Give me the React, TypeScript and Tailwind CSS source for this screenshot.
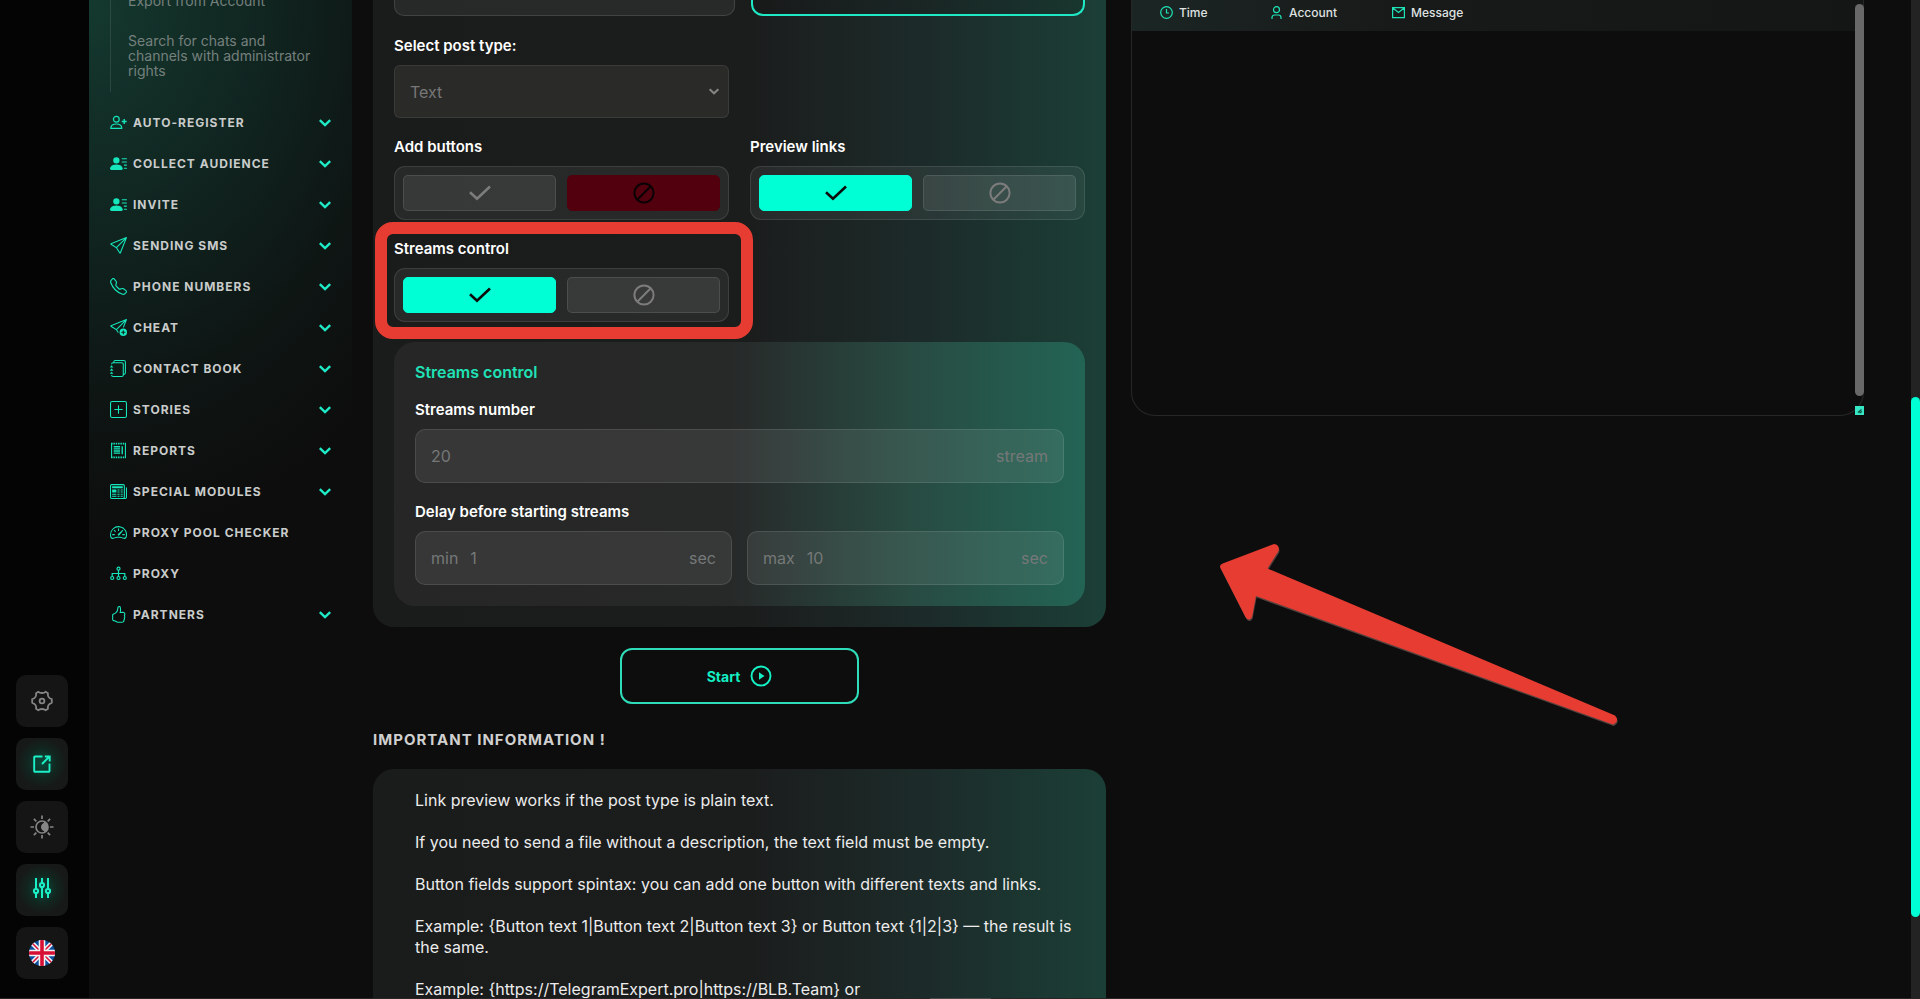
import React from "react";
import {
  BsHandThumbsUp,
  BsJournals,
  BsNewspaper,
  BsPersonLinesFill,
  BsPlusSquare,
  BsSend,
  BsSendPlus,
  BsSpeedometer2,
  BsTelephone,
} from "react-icons/bs";

type IconProps = { className?: string };

const Chevron = ({ className }: IconProps) => (
  <svg viewBox="0 0 12 8" fill="none" stroke="currentColor" strokeWidth="2.400" className={className} aria-hidden="true">
    <path d="M.8 1.200 6 6.200 11.200 1.200" />
  </svg>
);

const PersonPlus = ({ className }: IconProps) => (
  <svg viewBox="0 0 17 17" fill="none" stroke="currentColor" strokeWidth="1.200" className={className} aria-hidden="true">
    <circle cx="6.300" cy="5.200" r="2.900" />
    <path d="M.8 14.400C.8 11.500 3 10 6.300 10s5.500 1.500 5.500 4.400Z" strokeLinejoin="round" />
    <path d="M14.200 5v5M11.700 7.500h5" strokeWidth="1.400" />
  </svg>
);

const Stamp = ({ className }: IconProps) => (
  <svg viewBox="0 0 16 16" fill="none" stroke="currentColor" strokeWidth="1" className={className} aria-hidden="true">
    <path d="M1.500 1v14M14.500 1v14" />
    <path d="M1 1.500h14M1 14.500h14" strokeDasharray="1.400 .8" strokeWidth="1.600" />
    <path d="M3.500 4.500h6M3.500 6.500h6M3.500 8.500h6M3.500 10.500h6M11.500 4v7.500" strokeWidth="1.300" />
  </svg>
);

const Network = ({ className }: IconProps) => (
  <svg viewBox="0 0 17 16" fill="none" stroke="currentColor" strokeWidth="1.200" className={className} aria-hidden="true">
    <circle cx="8.500" cy="3.200" r="1.500" />
    <circle cx="2.200" cy="12.500" r="1.500" />
    <circle cx="8.500" cy="12.500" r="1.500" />
    <circle cx="14.800" cy="12.500" r="1.500" />
    <path d="M8.500 4.700V11M2.200 11V8h12.600v3" />
  </svg>
);

const Check = ({ className }: IconProps) => (
  <svg viewBox="0 0 22 16" fill="none" stroke="currentColor" strokeWidth="2.600" className={className} aria-hidden="true">
    <path d="M1 7.200 8 13.800 21 1.500" />
  </svg>
);

const Ban = ({ className }: IconProps) => (
  <svg viewBox="0 0 22 22" fill="none" stroke="currentColor" strokeWidth="2" className={className} aria-hidden="true">
    <circle cx="11" cy="11" r="9.600" />
    <path d="M4.300 17.700 17.700 4.300" />
  </svg>
);

const Gear = () => (
  <svg viewBox="0 0 22 22" className="size-[22px]" fill="none" stroke="currentColor" strokeWidth="1.800" strokeLinejoin="round" aria-hidden="true">
    <path d="M7.400 1.800C8.600 3.400 13.400 3.400 14.600 1.800L17 3.200C16.200 5.600 17.800 8.600 20.800 9.200V12.800C17.800 13.400 16.200 16.400 17 18.800L14.600 20.200C13.400 18.600 8.600 18.600 7.400 20.200L5 18.800C5.800 16.400 4.200 13.400 1.200 12.800V9.200C4.200 8.600 5.800 5.600 5 3.200Z" />
    <circle cx="11" cy="11" r="2.400" />
  </svg>
);

const External = () => (
  <svg viewBox="0 0 18 18" className="size-[18px]" fill="none" stroke="currentColor" strokeWidth="1.900" aria-hidden="true">
    <path d="M9.500 1.500H2A.8.800 0 0 0 1.200 2.300V16A.8.800 0 0 0 2 16.800H15.700A.8.800 0 0 0 16.500 16V8.500" />
    <path d="M9 9 16 2M11.800 1.500h4.900v4.900" />
  </svg>
);

const Sun = () => (
  <svg viewBox="0 0 24 24" className="size-[24px]" fill="none" stroke="currentColor" strokeWidth="1.700" aria-hidden="true">
    <circle cx="12" cy="12" r="6" />
    <path d="M11 12a4 4 0 0 1 5-4v8a4 4 0 0 1-5-4ZM14 6.500a6 6 0 0 1 0 11Z" fill="currentColor" stroke="none" />
    <path d="M12 .5v3.500M12 20v3.500M.5 12H4M20 12h3.500M3.900 3.900l2.400 2.400M17.700 17.700l2.400 2.400M3.900 20.100l2.400-2.400M17.700 6.300l2.400-2.400" />
  </svg>
);

const Sliders = () => (
  <svg viewBox="0 0 20 22" className="mb-1 h-[22px] w-5" fill="none" stroke="currentColor" strokeWidth="2" aria-hidden="true">
    <path d="M4 1v11M4 16.500V21M10 1v4.500M10 10v11M16 1v11M16 16.500V21" />
    <circle cx="4" cy="14" r="2.100" />
    <circle cx="10" cy="8" r="2.100" />
    <circle cx="16" cy="14" r="2.100" />
  </svg>
);

const Flag = () => (
  <svg viewBox="0 0 26 26" className="size-[26px] rounded-full" aria-hidden="true">
    <rect width="26" height="26" fill="#0b4f9e" />
    <path d="M0 0 26 26M26 0 0 26" stroke="#f2f2f5" strokeWidth="4.600" />
    <path d="M0 0 26 26M26 0 0 26" stroke="#d80f35" strokeWidth="1.500" />
    <path d="M13 0v26M0 13h26" stroke="#f2f2f5" strokeWidth="6.600" />
    <path d="M13 0v26M0 13h26" stroke="#d80f35" strokeWidth="3.600" />
  </svg>
);

const menu: { label: string; icon: React.ComponentType<IconProps>; leaf?: boolean }[] = [
  { label: "Auto-register", icon: PersonPlus },
  { label: "Collect audience", icon: BsPersonLinesFill },
  { label: "Invite", icon: BsPersonLinesFill },
  { label: "Sending SMS", icon: BsSend },
  { label: "Phone numbers", icon: BsTelephone },
  { label: "Cheat", icon: BsSendPlus },
  { label: "Contact book", icon: BsJournals },
  { label: "Stories", icon: BsPlusSquare },
  { label: "Reports", icon: Stamp },
  { label: "Special modules", icon: BsNewspaper },
  { label: "Proxy pool checker", icon: BsSpeedometer2, leaf: true },
  { label: "Proxy", icon: Network, leaf: true },
  { label: "Partners", icon: BsHandThumbsUp },
];

const railButtons = [
  { label: "Settings", icon: Gear, active: false },
  { label: "Open in new window", icon: External, active: true },
  { label: "Theme", icon: Sun, active: false },
  { label: "Filters", icon: Sliders, active: true },
  { label: "Language", icon: Flag, active: false },
];

function Rail() {
  return (
    <aside className="flex w-[89px] shrink-0 flex-col justify-end gap-[11px] bg-[#040404] pb-5 pl-4">
      {railButtons.map(({ label, icon: Icon, active }) => (
        <button
          key={label}
          type="button"
          aria-label={label}
          className={
            active
              ? "flex size-[52px] items-center justify-center rounded-[10px] bg-[#171818] bg-[radial-gradient(circle_at_50%_48%,#0a4a3c_0%,#12251f_40%,transparent_68%)] text-[#1cf0c6]"
              : "flex size-[52px] items-center justify-center rounded-[10px] bg-[#151515] text-[#858585]"
          }
        >
          <Icon />
        </button>
      ))}
    </aside>
  );
}

function Sidebar() {
  return (
    <nav className="w-[263px] shrink-0 overflow-hidden bg-[radial-gradient(ellipse_420px_540px_at_0_0,#14392f_0%,#10231f_45%,#0e1614_72%,transparent_100%)] pr-[21px] pl-[21px]">
      <div className="-mt-[7px] border-l border-white/10 pr-3 pb-[14px] pl-[17px] text-[14px] leading-[15px] text-[#75807d]">
        <a href="#export" className="block">
          Export from Account
        </a>
        <a href="#search" className="mt-[25px] block">
          Search for chats and channels with administrator rights
        </a>
      </div>
      <ul className="mt-[10px]">
        {menu.map(({ label, icon: Icon, leaf }) => (
          <li key={label}>
            <a href={"#" + label.toLowerCase().split(" ").join("-")} className="flex h-[41px] items-center text-[#c9cccb]">
              <Icon className="size-[17px] shrink-0 text-[#16e6bb]" />
              <span className="ml-[6px] text-[12px] font-bold tracking-[1px] uppercase">{label}</span>
              {!leaf && <Chevron className="ml-auto h-2 w-3 text-[#1feac6]" />}
            </a>
          </li>
        ))}
      </ul>
    </nav>
  );
}

function Toggle({ label, on }: { label: string; on: boolean }) {
  const idle = "flex h-9 flex-1 items-center justify-center rounded-[5px] border border-white/10 bg-white/8 text-[#7c7c7c]";
  return (
    <div role="group" aria-label={label}>
      <div className="text-[15px] leading-5 font-semibold text-white">{label}</div>
      <div className="mt-[9px] flex h-[54px] items-center gap-[11px] rounded-[11px] border border-white/10 bg-white/6 px-2">
        <button
          type="button"
          aria-label="On"
          aria-pressed={on}
          className={on ? "flex h-9 flex-1 items-center justify-center rounded-[5px] border border-[#00ffd5] bg-[#00ffd5] text-[#0c0c0c]" : idle}
        >
          <Check className="h-4 w-[22px]" />
        </button>
        <button
          type="button"
          aria-label="Off"
          aria-pressed={!on}
          className={on ? idle : "flex h-9 flex-1 items-center justify-center rounded-[5px] border border-[#52000e] bg-[#52000e] text-[#0a0204]"}
        >
          <Ban className="size-[22px]" />
        </button>
      </div>
    </div>
  );
}

function UnitInput({ id, label, prefix, unit, value }: { id: string; label: string; prefix?: string; unit: string; value: string }) {
  return (
    <div className="flex h-[54px] min-w-0 items-center gap-3 rounded-[10px] border border-white/10 bg-white/8 px-[15px] text-[16px] text-[#757878]">
      {prefix && <label htmlFor={id}>{prefix}</label>}
      <input id={id} aria-label={label} defaultValue={value} className="min-w-0 flex-1 bg-transparent outline-none" />
      <span>{unit}</span>
    </div>
  );
}

const cardBg = "bg-[linear-gradient(90deg,#1a1b1b_0%,#1b1c1c_50%,#1c2c2a_77%,#1b3f36_100%)]";

function PostForm() {
  return (
    <form className={"rounded-b-[21px] px-[21px] pb-[21px] " + cardBg}>
      <div className="grid grid-cols-[341fr_334fr] gap-4">
        <div className="h-4 rounded-b-[10px] border border-t-0 border-white/12 bg-white/6" />
        <div className="h-4 rounded-b-xl border-2 border-t-0 border-[#1fe8c4] bg-black/10" />
      </div>
      <div className="mt-5 grid grid-cols-2 gap-x-[21px] gap-y-[19px]">
        <div className="col-span-2">
          <label htmlFor="post-type" className="block text-[15px] leading-5 font-semibold text-white">
            Select post type:
          </label>
          <div className="mt-[9px] grid grid-cols-2 gap-x-[21px]">
            <div className="relative">
              <select
                id="post-type"
                className="h-[53px] w-full appearance-none rounded-[6px] border border-white/8 bg-[#2a2a29] px-[15px] text-[16px] text-[#777777]"
              >
                <option>Text</option>
              </select>
              <Chevron className="pointer-events-none absolute top-[23px] right-[10px] h-[7px] w-[10px] text-[#858585]" />
            </div>
          </div>
        </div>
        <Toggle label="Add buttons" on={false} />
        <Toggle label="Preview links" on />
        <div className="relative">
          <Toggle label="Streams control" on />
          <div className="pointer-events-none absolute -top-[17px] -right-6 -bottom-[17px] -left-[19px] rounded-[18px] border-[12px] border-[#e63c32]" />
        </div>
      </div>
      <fieldset className="mt-5 rounded-[21px] bg-[linear-gradient(90deg,#262627_0%,#272828_48%,#284a41_74%,#236455_100%)] px-[21px] pt-5 pb-[21px]">
        <h3 className="text-[16px] leading-5 font-semibold text-[#1fe3b6]">Streams control</h3>
        <label htmlFor="streams" className="mt-[18px] mb-[9px] block text-[15px] leading-5 font-semibold text-white">
          Streams number
        </label>
        <UnitInput id="streams" label="Streams number" unit="stream" value="20" />
        <div className="mt-[19px] mb-[9px] text-[15px] leading-5 font-semibold text-white">Delay before starting streams</div>
        <div className="grid grid-cols-2 gap-[15px]">
          <UnitInput id="delay-min" label="Minimum delay" prefix="min" unit="sec" value="1" />
          <UnitInput id="delay-max" label="Maximum delay" prefix="max" unit="sec" value="10" />
        </div>
      </fieldset>
    </form>
  );
}

const notes = [
  "Link preview works if the post type is plain text.",
  "If you need to send a file without a description, the text field must be empty.",
  "Button fields support spintax: you can add one button with different texts and links.",
  "Example: {Button text 1|Button text 2|Button text 3} or Button text {1|2|3} — the result is the same.",
  "Example: {https://TelegramExpert.pro|https://BLB.Team} or",
];

function LogPanel() {
  return (
    <section className="relative h-[416px] rounded-b-3xl border border-t-0 border-[#262828]">
      <table className="w-full table-fixed text-left text-[12px] font-medium text-[#dfe2e1]">
        <thead className="bg-[linear-gradient(90deg,#1b2624_0%,#181a19_35%,#141515_100%)]">
          <tr className="h-[31px]">
            <th className="w-[138px] pb-[6px] pl-7 font-medium">
              <span className="flex items-center gap-[6px]">
                <svg viewBox="0 0 13 13" className="size-[13px] text-[#1fe3b6]" fill="none" stroke="currentColor" strokeWidth="1.200" aria-hidden="true">
                  <circle cx="6.500" cy="6.500" r="5.800" />
                  <path d="M6.500 3v4H9" />
                </svg>
                Time
              </span>
            </th>
            <th className="w-[122px] pb-[6px] font-medium">
              <span className="flex items-center gap-[6px]">
                <svg viewBox="0 0 13 13" className="size-[13px] text-[#1fe3b6]" fill="none" stroke="currentColor" strokeWidth="1.200" aria-hidden="true">
                  <circle cx="6.500" cy="3.700" r="3" />
                  <path d="M2 13v-1.500a2.500 2.500 0 0 1 2.500-2.500h4a2.500 2.500 0 0 1 2.500 2.500V13" />
                </svg>
                Account
              </span>
            </th>
            <th className="pb-[6px] font-medium">
              <span className="flex items-center gap-[6px]">
                <svg viewBox="0 0 13 13" className="size-[13px] text-[#1fe3b6]" fill="none" stroke="currentColor" strokeWidth="1.200" aria-hidden="true">
                  <path d="M.6 1.600h11.800v10H.6ZM.8 2l5.700 4.500L12.200 2" />
                </svg>
                Message
              </span>
            </th>
          </tr>
        </thead>
      </table>
      <div className="absolute top-1 -right-px h-[392px] w-[9px] rounded-full bg-[#686868]" />
      <svg viewBox="0 0 9 9" className="absolute -right-px bottom-0 size-[9px]" aria-hidden="true">
        <rect width="9" height="9" fill="#35e6c2" />
        <path d="M3 6.500 6.500 3.500M4.500 7l2.500-1.500" stroke="#0d4a3e" strokeWidth="1.200" />
      </svg>
    </section>
  );
}

export default function App() {
  return (
    <div className="relative flex h-screen overflow-hidden bg-[#0d0d0d] font-['Inter','Noto_Sans',sans-serif]">
      <Rail />
      <Sidebar />
      <main className="grid min-w-0 flex-1 grid-cols-2 items-start gap-[25px] pr-[47px] pl-[21px]">
        <div className="min-w-0">
          <PostForm />
          <button
            type="button"
            className="mx-auto mt-[21px] flex h-14 w-[239px] items-center justify-center gap-[10px] rounded-xl border-2 border-[#2fdcba] text-[14px] font-bold text-[#14efc4]"
          >
            Start
            <svg viewBox="0 0 22 22" className="size-[22px]" aria-hidden="true">
              <circle cx="11" cy="11" r="9.500" fill="none" stroke="currentColor" strokeWidth="1.900" />
              <path d="M9 7.300 14.500 11 9 14.700Z" fill="currentColor" />
            </svg>
          </button>
          <h2 className="mt-[26px] text-[15px] leading-5 font-bold tracking-[1px] text-[#d0d0d0] uppercase">Important information !</h2>
          <section className={"mt-[19px] rounded-t-[21px] pt-[21px] pr-8 pb-10 pl-[42px] " + cardBg}>
            <div className="space-y-[21px] text-[16px] leading-[21px] text-[#ececec]">
              {notes.map((note) => (
                <p key={note}>{note}</p>
              ))}
            </div>
          </section>
        </div>
        <LogPanel />
      </main>
      <div className="w-[9px] shrink-0 bg-[#232323] pt-[397px]">
        <div className="h-[520px] rounded-full bg-[#00ffd5]" />
      </div>
      <svg viewBox="0 0 440 220" className="pointer-events-none absolute top-[521px] left-[1200px] h-[220px] w-[440px]" aria-hidden="true">
        <path
          d="M24 42 74 23Q80 24 78.500 30L67.500 47.500 415 194.500Q420 200 413 203.500L56 75 52 96Q49 101 45.500 96L20 46Q20 43 24 42Z"
          fill="#55423f"
          transform="translate(.6 1.600)"
        />
        <path d="M24 42 74 23Q80 24 78.500 30L67.500 47.500 415 194.500Q420 200 413 203.500L56 75 52 96Q49 101 45.500 96L20 46Q20 43 24 42Z" fill="#e63c32" />
      </svg>
      <div className="absolute inset-x-0 bottom-0 h-px bg-[#262626]">
        <div className="mx-auto h-px w-[61px] bg-[#4a4a4a]" />
      </div>
    </div>
  );
}
